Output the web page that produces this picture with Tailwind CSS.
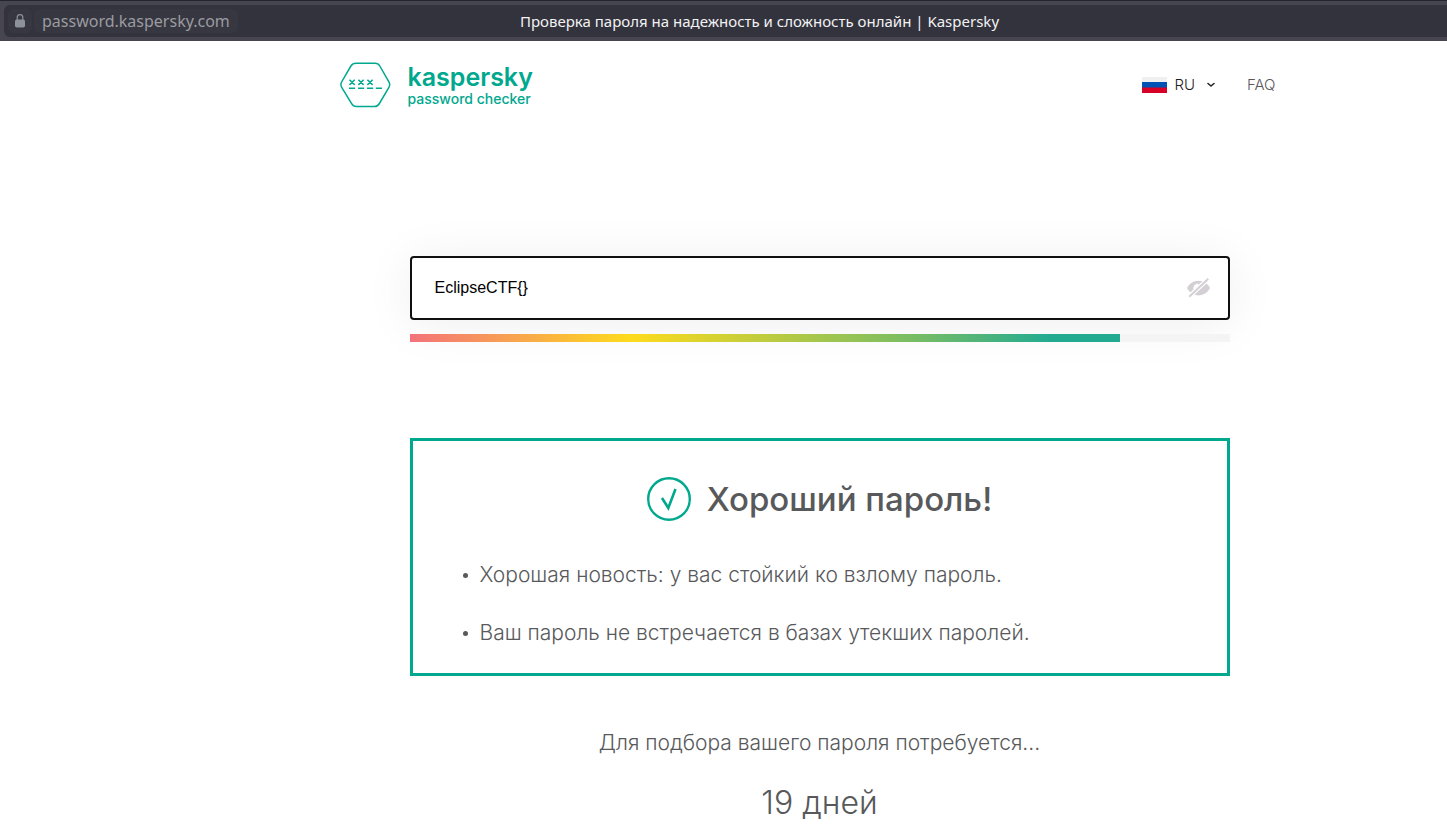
<!DOCTYPE html>
<html lang="ru">
<head>
<meta charset="utf-8">
<meta name="viewport" content="width=device-width, initial-scale=1">
<title>Проверка пароля на надежность и сложность онлайн | Kaspersky</title>
<script src="https://cdn.jsdelivr.net/npm/@tailwindcss/browser@4"></script>
</head>
<body class="min-h-screen bg-white font-['Inter',sans-serif] text-[#58595b]">
<div class="border-t border-[#24242e] bg-[#474650] pt-1 pb-1 pl-1">
  <div class="grid h-8 grid-cols-[1fr_auto_1fr] items-center rounded-l-md bg-[#33333d] font-['Noto_Sans',sans-serif] text-[15px]">
    <div class="flex items-center gap-0.5 pl-1">
      <button type="button" aria-label="Защищённое соединение" class="flex h-6 w-6 items-center justify-center rounded-md bg-[#363741]">
        <svg class="h-3.5 w-2.5" viewBox="0 0 10 14" fill="none"><path d="M2.200 6V3.500a2.800 2.800 0 0 1 5.600 0V6" stroke="#8d9299" stroke-width="1.200"/><rect y="5.500" width="10" height="8" rx="1.800" fill="#8d9299"/></svg>
      </button>
      <a href="#" class="rounded-md bg-[#363741] px-2 text-base leading-6 text-[#9b9ba0]">password.kaspersky.com</a>
    </div>
    <div class="pl-17 leading-6 text-[#f2f2f3]">Проверка пароля на надежность и сложность онлайн | Kaspersky</div>
    <div></div>
  </div>
</div>
<div class="pl-48">
  <header class="mx-auto flex max-w-[960px] items-start justify-between pt-5">
    <a href="#" class="flex items-start gap-[17px] text-[#00a88e]" aria-label="kaspersky password checker">
      <svg class="h-12 w-[51px]" viewBox="0 0 51 48" fill="none" stroke="currentColor" stroke-width="1.500">
        <path d="M16 2.200 35 2.200Q38.200 2.200 39.800 5L48.900 20.800Q50.500 23.600 48.900 26.500L39.400 42.500Q37.700 45.500 34.500 45.500H16.500Q13.300 45.500 11.600 42.600L1.700 26.400Q0.100 23.700 1.600 21L10.900 5Q12.700 2.200 16 2.200Z"/>
        <path d="M9.500 18.700l5.200 5.200m0-5.200l-5.200 5.200M18.400 18.700l5.200 5.200m0-5.200l-5.200 5.200M27.400 18.700l5.200 5.200m0-5.200l-5.200 5.200M9 27.200h6.200M18 27.200h6.200M27 27.200h6.200M35.800 27.200h6.200"/>
      </svg>
      <span class="flex flex-col pt-0.5">
        <span class="text-[25px] leading-7 font-semibold">kaspersky</span>
        <span class="text-sm leading-4 font-medium">password checker</span>
      </span>
    </a>
    <nav class="flex items-center gap-8 pt-3 pr-6 text-[15px] leading-6 font-light">
      <button type="button" class="flex items-center text-[#1d1d1b]">
        <svg class="mr-[7px] h-4 w-[25px]" viewBox="0 0 25 16"><path fill="#f0f0f0" d="M0 0h25v6H0z"/><path fill="#0052b4" d="M0 5h25v6H0z"/><path fill="#d80027" d="M0 10.500h25V16H0z"/></svg>
        RU
        <svg class="ml-3 h-2 w-2" viewBox="0 0 8 8" fill="none" stroke="#1d1d1b" stroke-width="1.500" stroke-linecap="round" stroke-linejoin="round"><path d="M1 2.500 4 5l3-2.500"/></svg>
      </button>
      <a href="#">FAQ</a>
    </nav>
  </header>
  <main class="mx-auto mt-[147px] max-w-[820px]">
    <form>
      <div class="flex h-16 items-center rounded border-2 border-[#101010] bg-white pr-[18px] pl-[23px] shadow-[0_4px_50px_rgba(0,0,0,0.07)]">
        <input type="text" aria-label="Пароль" value="EclipseCTF{}" class="min-w-0 flex-1 font-['Liberation_Sans',sans-serif] text-base text-black outline-none">
        <button type="button" aria-label="Скрыть пароль" class="shrink-0">
          <svg class="h-5 w-[23px]" viewBox="0 0 23 20"><path fill="#d3cfd4" d="M0 10Q3.500 3 11.500 2.800q8 .2 11.500 7.200-3.500 7.200-11.500 7.400Q3.500 17.200 0 10Z"/><path d="M7.300 11.300A4.100 4.100 0 0 1 11.400 6.400" stroke="#fff" stroke-width="2" fill="none"/><circle cx="10" cy="8.600" r="1.900" fill="#fff"/><path d="M1.800 18.800 21.300.8" stroke="#fff" stroke-width="4.500"/><path d="M2.200 18.800 21.300.8" stroke="#d3cfd4" stroke-width="1.900"/></svg>
        </button>
      </div>
    </form>
    <div class="relative mt-3.5 h-2 bg-[#f4f4f4]">
      <div class="h-full bg-[linear-gradient(to_right,#f3727b_0%,#fedb1c_31%,#74bb66_72%,#23ab91_90%)]" style="width:86.6%"></div>
    </div>
    <section class="mt-24 border-3 border-[#00a88e] px-[50px] pt-9 pb-6">
      <h1 class="flex items-center justify-center gap-4 text-[33px] leading-[44px] font-medium">
        <svg class="h-11 w-11" viewBox="0 0 44 44" fill="none" stroke="#00a88e"><circle cx="22" cy="22" r="20.800" stroke-width="2.400"/><path d="M15 21l6.300 10L28.500 12" stroke-width="2.600"/></svg>
        Хороший пароль!
      </h1>
      <ul class="mt-[38px] flex flex-col gap-[26px] text-[21px] leading-8 font-light">
        <li class="flex items-center gap-3"><span class="h-[5px] w-[5px] shrink-0 rounded-full bg-[#58595b]"></span>Хорошая новость: у вас стойкий ко взлому пароль.</li>
        <li class="flex items-center gap-3"><span class="h-[5px] w-[5px] shrink-0 rounded-full bg-[#58595b]"></span>Ваш пароль не встречается в базах утекших паролей.</li>
      </ul>
    </section>
    <section class="pt-[51px] text-center font-light">
      <p class="text-[21px] leading-8">Для подбора вашего пароля потребуется...</p>
      <p class="mt-[22px] text-[32px] leading-[44px]">19 дней</p>
    </section>
  </main>
</div>
</body>
</html>
